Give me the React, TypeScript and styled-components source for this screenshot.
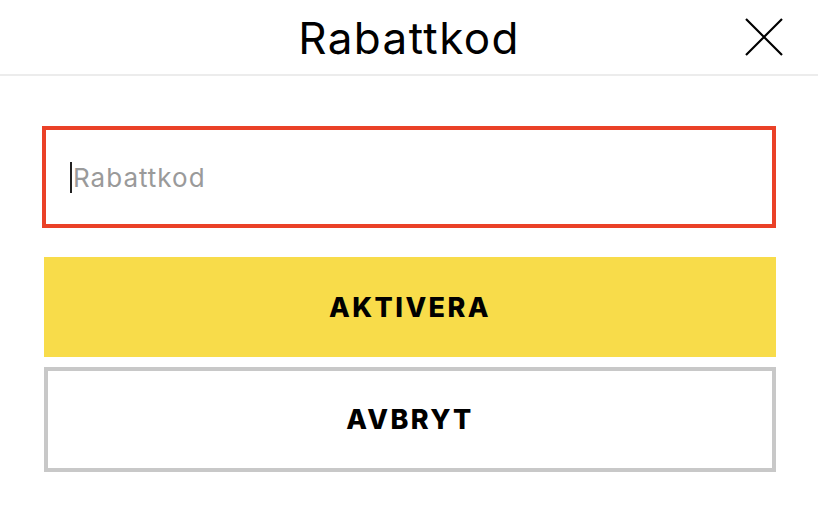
import React from "react";
import styled, { createGlobalStyle } from "styled-components";

const Global = createGlobalStyle`
  html, body { margin: 0; padding: 0; background: #ffffff; }
  body { font-family: Inter, "Noto Sans", sans-serif; color: #000; }
  * { box-sizing: border-box; }
`;

const Dialog = styled.div`
  width: 818px;
  height: 508px;
  background: #fff;
  display: flex;
  flex-direction: column;
`;

const Header = styled.header`
  height: 76px;
  border-bottom: 2px solid #ececec;
  display: grid;
  grid-template-columns: 1fr auto 1fr;
  align-items: center;
`;

const Title = styled.h1`
  grid-column: 2;
  margin: 0;
  font-size: 44px;
  font-weight: 400;
  letter-spacing: 1.4px;
  line-height: 1;
  padding-top: 2px;
`;

const CloseButton = styled.button`
  grid-column: 3;
  justify-self: end;
  margin-right: 34px;
  width: 40px;
  height: 40px;
  padding: 0;
  border: none;
  background: transparent;
  display: flex;
  align-items: center;
  justify-content: center;
  cursor: pointer;
`;

const Body = styled.div`
  padding: 50px 42px 0 42px;
  display: flex;
  flex-direction: column;
`;

const Field = styled.div`
  position: relative;
  height: 102px;
  border: 4px solid #ea4127;
  display: flex;
  align-items: center;
  padding-left: 24px;
`;

const Caret = styled.span`
  width: 2px;
  height: 31px;
  background: #222;
  margin-right: 1px;
`;

const Input = styled.input`
  border: none;
  outline: none;
  flex: 1;
  font-family: inherit;
  font-size: 26px;
  letter-spacing: 1px;
  color: #222;
  background: transparent;
  padding: 0;
  &::placeholder { color: #9a9a9a; }
`;

const Actions = styled.div`
  margin-top: 29px;
  padding-left: 2px;
  display: flex;
  flex-direction: column;
  gap: 10px;
`;

const Button = styled.button<{ $variant: "primary" | "secondary" }>`
  font-family: inherit;
  font-size: 27px;
  font-weight: 800;
  letter-spacing: 2.4px;
  color: #000;
  cursor: pointer;
  padding: 0;
  height: ${(p) => (p.$variant === "primary" ? "100px" : "105px")};
  background: ${(p) => (p.$variant === "primary" ? "#f8dc4a" : "#fff")};
  border: ${(p) => (p.$variant === "primary" ? "none" : "4px solid #c8c8c8")};
`;

export default function App() {
  return (
    <Dialog>
      <Global />
      <Header>
        <Title>Rabattkod</Title>
        <CloseButton aria-label="Stäng">
          <svg width="40" height="40" viewBox="0 0 40 40">
            <path d="M2 2 L38 38 M38 2 L2 38" stroke="#000" strokeWidth="2.2" fill="none" />
          </svg>
        </CloseButton>
      </Header>
      <Body>
        <Field>
          <Caret />
          <Input placeholder="Rabattkod" />
        </Field>
        <Actions>
          <Button $variant="primary">AKTIVERA</Button>
          <Button $variant="secondary">AVBRYT</Button>
        </Actions>
      </Body>
    </Dialog>
  );
}
